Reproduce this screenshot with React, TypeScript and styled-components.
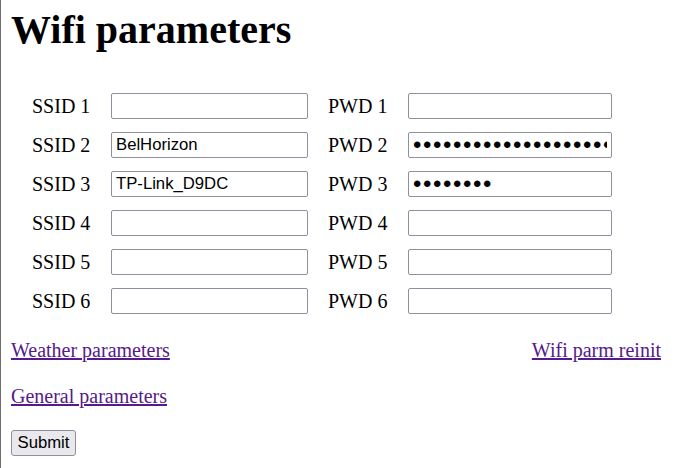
import * as React from "react";
import styled, { createGlobalStyle } from "styled-components";

const GlobalStyle = createGlobalStyle`
	html {
		background: #fff;
	}
	body {
		margin: 0;
		min-height: 468px;
		border-left: 1px solid #6e6e6e;
		padding: 7px 14px 0 10px;
		box-sizing: border-box;
		font-family: "Liberation Serif", "Times New Roman", serif;
		font-size: 20px;
		color: #000;
	}
`;

const Title = styled.h1`
	margin: 0;
	font-size: 40px;
	font-weight: bold;
	line-height: 46px;
`;

const Grid = styled.div`
	display: grid;
	grid-template-columns: 79px 217px 80px 204px;
	justify-content: start;
	align-items: center;
	row-gap: 13px;
	margin: 40px 0 0 21px;
`;

const Label = styled.label`
	line-height: 23px;
`;

const Field = styled.input<{ $w: number; $masked?: boolean }>`
	box-sizing: border-box;
	width: ${(p) => p.$w}px;
	height: 26px;
	margin: 0;
	padding: 0 4px;
	border: 1px solid #8f8f9d;
	border-radius: 2px;
	font-family: "Liberation Sans", Arial, sans-serif;
	font-size: ${(p) => (p.$masked ? "24px" : "16.7px")};
	letter-spacing: ${(p) => (p.$masked ? "1.6px" : "normal")};
	color: #000;
	background: #fff;
	outline: none;
`;

const Links = styled.div`
	display: flex;
	flex-direction: column;
	gap: 23px;
	margin-top: 25px;
`;

const LinkRow = styled.div`
	display: flex;
	justify-content: space-between;
	line-height: 23px;
`;

const Link = styled.a`
	color: #551a8b;
	text-decoration: underline;
`;

const Button = styled.button`
	align-self: flex-start;
	height: 26px;
	width: 65px;
	margin-top: -1px;
	padding: 0;
	border: 1px solid #8f8f9d;
	border-radius: 3px;
	background: #e9e9ed;
	font-family: "Liberation Sans", Arial, sans-serif;
	font-size: 16.7px;
	color: #000;
`;

const rows = [
	{ n: 1, ssid: "", pwd: "" },
	{ n: 2, ssid: "BelHorizon", pwd: "xxxxxxxxxxxxxxxxxxxxxxxx" },
	{ n: 3, ssid: "TP-Link_D9DC", pwd: "xxxxxxxx" },
	{ n: 4, ssid: "", pwd: "" },
	{ n: 5, ssid: "", pwd: "" },
	{ n: 6, ssid: "", pwd: "" },
];

const App = () => {
	return (
		<>
			<GlobalStyle />
			<Title>Wifi parameters</Title>
			<Grid>
				{rows.map((r) => (
					<React.Fragment key={r.n}>
						<Label>SSID {r.n}</Label>
						<Field $w={197} type="text" defaultValue={r.ssid} />
						<Label>PWD {r.n}</Label>
						<Field $w={204} $masked type="password" defaultValue={r.pwd} />
					</React.Fragment>
				))}
			</Grid>
			<Links>
				<LinkRow>
					<Link href="#">Weather parameters</Link>
					<Link href="#">Wifi parm reinit</Link>
				</LinkRow>
				<LinkRow>
					<Link href="#">General parameters</Link>
				</LinkRow>
				<Button type="submit">Submit</Button>
			</Links>
		</>
	);
};

export default App;
